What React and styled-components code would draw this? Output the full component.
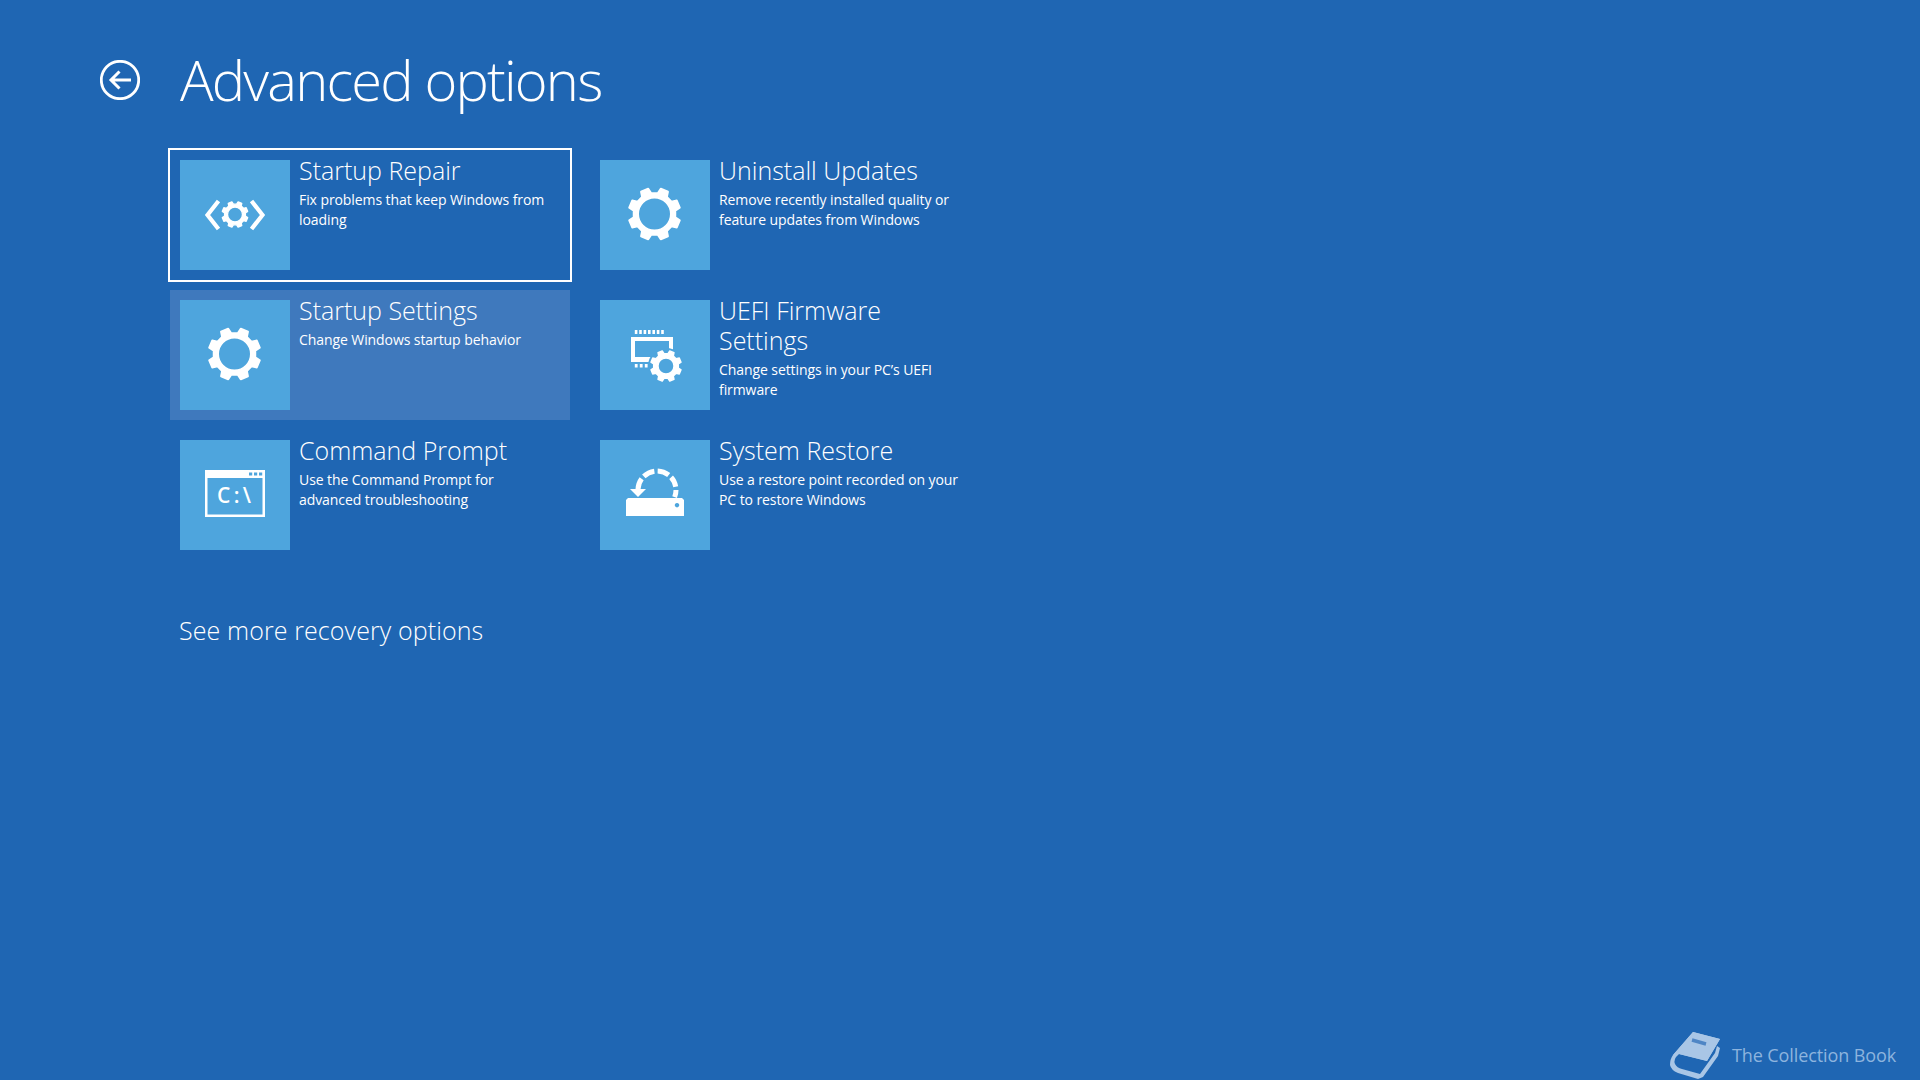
import React from 'react'
import styled, { createGlobalStyle } from 'styled-components'

const GlobalStyle = createGlobalStyle`
  html, body { margin: 0; padding: 0; height: 100%; }
  body { background: #1f66b3; font-family: "Open Sans", "Noto Sans", sans-serif; color: #fff; overflow: hidden; }
`

const Page = styled.div`
  position: relative;
  width: 1920px;
  height: 1080px;
  background: #1f66b3;
  overflow: hidden;
`

const Header = styled.header`
  display: flex;
  align-items: center;
  gap: 40px;
  height: 80px;
  padding: 40px 0 0 100px;
`

const BackButton = styled.button`
  width: 40px;
  height: 40px;
  padding: 0;
  border: 0;
  background: none;
  display: block;
`

const Title = styled.h1`
  margin: -2px 0 0;
  font-size: 56px;
  line-height: 80px;
  font-weight: 300;
  letter-spacing: -1.8px;
`

const Grid = styled.div`
  display: grid;
  grid-template-rows: repeat(3, 130px);
  grid-auto-flow: column;
  grid-auto-columns: 400px;
  gap: 10px 20px;
  padding: 30px 0 0 170px;
`

const Tile = styled.div`
  display: flex;
  gap: 9px;
  padding: 10px;
  background: ${p => (p.$hover ? '#3f79bd' : 'transparent')};
  outline: ${p => (p.$focus ? '2px solid #fff' : 'none')};
  outline-offset: 0;
`

const IconBox = styled.div`
  flex: 0 0 110px;
  height: 110px;
  background: #4ea5dd;
`

const TileText = styled.div`
  width: 250px;
  margin-top: -5px;
`

const TileTitle = styled.div`
  font-size: 25px;
  line-height: 30px;
  font-weight: 300;
`

const TileDesc = styled.div`
  font-size: 14px;
  line-height: 20px;
  margin-top: 5px;
  letter-spacing: -0.08px;
`

const MoreLink = styled.div`
  margin: 55px 0 0 179px;
  font-size: 25px;
  line-height: 30px;
  font-weight: 300;
  letter-spacing: 0.1px;
`

const Watermark = styled.div`
  position: absolute;
  left: 1670px;
  top: 1032px;
  display: flex;
  align-items: center;
  gap: 12px;
  color: #8db4de;
  font-size: 18px;
  letter-spacing: -0.1px;
`

const WatermarkText = styled.span`
  margin-top: -2px;
`

const Svg = styled.svg`
  display: block;
  flex: none;
`

// 8 tooth gear outline with a round hole, the hole is cut by evenodd
const gearPath = (cx, cy, tip, root, hole) => {
  const pts = []
  const n = 8
  for (let i = 0; i < n; i++) {
    const a = ((i + 0.5) * 2 * Math.PI) / n - Math.PI / 2
    const step = (2 * Math.PI) / n
    const ang = [
      [a - step * 0.3, root],
      [a - step * 0.19, tip],
      [a + step * 0.19, tip],
      [a + step * 0.3, root],
    ]
    ang.forEach(([t, r]) => pts.push(`${(cx + r * Math.cos(t)).toFixed(2)} ${(cy + r * Math.sin(t)).toFixed(2)}`))
  }
  const ring = `M${cx - hole} ${cy}a${hole} ${hole} 0 1 0 ${hole * 2} 0a${hole} ${hole} 0 1 0 ${-hole * 2} 0Z`
  return `M${pts.join('L')}Z${ring}`
}

const Gear = ({ cx = 54.5, cy = 54, tip = 26, root = 21, hole = 16.5, sw = 2 }) => (
  <path d={gearPath(cx, cy, tip, root, hole)} fill="#fff" fillRule="evenodd" stroke="#fff" strokeWidth={sw} strokeLinejoin="round" />
)

const Icon = ({ children }) => (
  <Svg width="110" height="110" viewBox="0 0 110 110">{children}</Svg>
)

const RepairIcon = () => (
  <Icon>
    <Gear cx={55} cy={54.5} tip={13} root={10.5} hole={7.5} sw={1.4} />
    <path d="M38.5 41 27.5 55 38.5 69M71.5 41 82.5 55 71.5 69" fill="none" stroke="#fff" strokeWidth="4.2" />
  </Icon>
)

const GearIcon = () => (
  <Icon>
    <Gear />
  </Icon>
)

const FirmwareIcon = () => (
  <Icon>
    {[36, 40.4, 44.8, 49.2, 53.6, 58, 62.4].map(x => (
      <rect key={x} x={x - 1.2} y="30" width="2.6" height="4" fill="#fff" />
    ))}
    {[36, 41, 46].map(x => (
      <rect key={x} x={x - 1.2} y="64" width="2.8" height="3.5" fill="#fff" />
    ))}
    <path d="M31 37H73V62H31ZM35 41V57H69V41Z" fill="#fff" fillRule="evenodd" />
    <circle cx="66" cy="66" r="18" fill="#4ea5dd" />
    <Gear cx={66} cy={66} tip={15.5} root={12.5} hole={8} sw={1.4} />
  </Icon>
)

const PromptIcon = () => (
  <Icon>
    <path d="M25 30H85V77H25ZM27.5 38V74.5H82.5V38Z" fill="#fff" fillRule="evenodd" />
    {[69, 74, 79].map(x => (
      <rect key={x} x={x} y="32.5" width="3.2" height="3" fill="#4ea5dd" />
    ))}
    <text x="37" y="63" fill="#fff" fontFamily="'Open Sans', sans-serif" fontSize="21" fontWeight="600" letterSpacing="3.4">C:\</text>
  </Icon>
)

const arc = (a0, a1, r = 19, cx = 57, cy = 50) => {
  const p = a => `${(cx + r * Math.cos((a * Math.PI) / 180)).toFixed(2)} ${(cy + r * Math.sin((a * Math.PI) / 180)).toFixed(2)}`
  return `M${p(a0)}A${r} ${r} 0 0 1 ${p(a1)}`
}

const RestoreIcon = () => (
  <Icon>
    {[[183, 216], [226, 262], [272, 308], [318, 350], [360, 382]].map(([a, b]) => (
      <path key={a} d={arc(a, b)} fill="none" stroke="#fff" strokeWidth="5" />
    ))}
    <path d="M30 49H46L38 57Z" fill="#fff" />
    <path d="M28 58H82L84 60V76H26V60ZM77 63a2.2 2.2 0 1 0 .01 0Z" fill="#fff" fillRule="evenodd" />
  </Icon>
)

const BackIcon = () => (
  <Svg width="40" height="40" viewBox="0 0 40 40">
    <circle cx="20" cy="20" r="18.7" fill="none" stroke="#fff" strokeWidth="2.8" />
    <path d="M31 20H11M19.5 11.5 11 20l8.5 8.5" fill="none" stroke="#fff" strokeWidth="3" />
  </Svg>
)

const BookLogo = () => (
  <Svg width="50" height="47" viewBox="0 0 50 47">
    <path
      d="M23 0 50 7 37 29 9 22Q3 27 5 32 7 36 12 37L30 42 45 21 47 14 50 16 48 24 33 45 28 47 8 41Q1 38 0 33 0 27 3 23Z"
      fill="#a9c6e6"
    />
    <path d="M23 0 50 7 37 29 9 22 3 23Z" fill="#a9c6e6" />
    <path d="M22 8 36 12" stroke="#4f86c5" strokeWidth="3.4" />
  </Svg>
)

const tiles = [
  { title: 'Startup Repair', desc: 'Fix problems that keep Windows from loading', icon: <RepairIcon />, focus: true },
  { title: 'Startup Settings', desc: 'Change Windows startup behavior', icon: <GearIcon />, hover: true },
  { title: 'Command Prompt', desc: 'Use the Command Prompt for advanced troubleshooting', icon: <PromptIcon /> },
  { title: 'Uninstall Updates', desc: 'Remove recently installed quality or feature updates from Windows', icon: <GearIcon /> },
  { title: 'UEFI Firmware Settings', desc: 'Change settings in your PC’s UEFI firmware', icon: <FirmwareIcon /> },
  { title: 'System Restore', desc: 'Use a restore point recorded on your PC to restore Windows', icon: <RestoreIcon /> },
]

export default function App() {
  return (
    <Page>
      <GlobalStyle />
      <Header>
        <BackButton aria-label="Back"><BackIcon /></BackButton>
        <Title>Advanced options</Title>
      </Header>
      <Grid>
        {tiles.map(t => (
          <Tile key={t.title} $focus={t.focus} $hover={t.hover}>
            <IconBox>{t.icon}</IconBox>
            <TileText>
              <TileTitle>{t.title}</TileTitle>
              <TileDesc>{t.desc}</TileDesc>
            </TileText>
          </Tile>
        ))}
      </Grid>
      <MoreLink>See more recovery options</MoreLink>
      <Watermark>
        <BookLogo />
        <WatermarkText>The Collection Book</WatermarkText>
      </Watermark>
    </Page>
  )
}
